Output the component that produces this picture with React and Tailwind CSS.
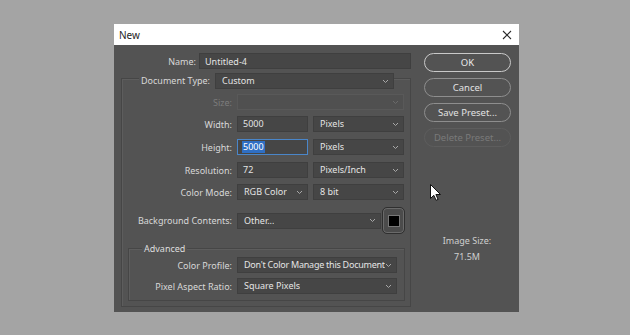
import React from 'react';

const Chevron = () => (
  <svg width="7" height="5" viewBox="0 0 7 5" className="shrink-0">
    <path d="M1 1l2.5 2.5L6 1" fill="none" stroke="#a8a8a8" strokeWidth="1" />
  </svg>
);

const Select = ({ value, w, disabled, tight }) => (
  <div
    className={`${w} h-[16px] flex items-center justify-between pl-[6px] pr-[4px] border ${
      disabled ? 'bg-[#505050] border-[#595959]' : 'bg-[#464646] border-[#3f3f3f] text-[#e4e4e4]'
    }`}
  >
    <span className={`whitespace-nowrap overflow-hidden leading-[14px] ${tight ? 'tracking-[-0.25px]' : ''}`}>{value}</span>
    {disabled ? <span className="opacity-30"><Chevron /></span> : <Chevron />}
  </div>
);

const Input = ({ value, focused }) => (
  <div
    className={`w-[71px] h-[16px] flex items-center pl-[4px] border ${
      focused ? 'bg-[#464646] border-[#4a86c9]' : 'bg-[#464646] border-[#3f3f3f]'
    } text-[#e4e4e4]`}
  >
    {focused ? (
      <span className="bg-[#2f6fc4] text-white px-[1px] leading-[12px]">{value}</span>
    ) : (
      <span className="px-[1px] leading-[12px]">{value}</span>
    )}
  </div>
);

const Label = ({ children, dim }) => (
  <div className={`w-[115px] pr-[5px] text-right whitespace-nowrap ${dim ? 'text-[#7c7c7c]' : ''}`}>{children}</div>
);

const Button = ({ children, primary, disabled }) => (
  <div
    className={`w-[87px] h-[19px] rounded-full flex items-center justify-center border ${
      primary
        ? 'border-[#c9c9c9] text-[#e8e8e8]'
        : disabled
        ? 'border-[#5d5d5d] text-[#7a7a7a]'
        : 'border-[#8e8e8e] text-[#e2e2e2]'
    }`}
  >
    {children}
  </div>
);

export default function App() {
  return (
    <div
      className="relative w-[630px] h-[335px] bg-[#a4a4a4] pt-[24px] pl-[114px] text-[9px] leading-none text-[#d8d8d8]"
      style={{ fontFamily: '"Noto Sans", "Open Sans", sans-serif' }}
    >
      <div className="w-[405px] h-[288px] bg-[#535353] flex flex-col">
        {/* title bar */}
        <div className="h-[21px] bg-white flex items-center justify-between pl-[5px] pr-[7px] text-[#1e1e1e] text-[10px]">
          <span>New</span>
          <svg width="10" height="10" viewBox="0 0 10 10">
            <path d="M1 1l8 8M9 1l-8 8" stroke="#2a2a2a" strokeWidth="1.1" />
          </svg>
        </div>

        <div className="flex flex-1">
          {/* left column */}
          <div className="w-[301px] pt-[8px]">
            <div className="flex items-center">
              <div className="w-[82px] text-right">Name:</div>
              <div className="ml-[3px] w-[212px] h-[16px] bg-[#464646] border border-[#3f3f3f] flex items-center pl-[5px] text-[#e4e4e4]">
                Untitled-4
              </div>
            </div>

            <div className="ml-[7px] mt-[9px] w-[290px] h-[229px] border border-[#464646] shadow-[inset_1px_1px_0_#5d5d5d]">
              <div className="-mt-[6px] flex items-center">
                <div className="w-[93px] flex justify-end">
                  <span className="bg-[#535353] pl-[2px] pr-[5px] leading-[16px]">Document Type:</span>
                </div>
                <Select value="Custom" w="w-[179px]" />
              </div>

              <div className="mt-[5px] flex items-center">
                <Label dim>Size:</Label>
                <Select value="" w="w-[167px]" disabled />
              </div>

              <div className="mt-[6px] flex items-center">
                <Label>Width:</Label>
                <Input value="5000" />
                <div className="ml-[5px]">
                  <Select value="Pixels" w="w-[91px]" />
                </div>
              </div>

              <div className="mt-[7px] flex items-center">
                <Label>Height:</Label>
                <Input value="5000" focused />
                <div className="ml-[5px]">
                  <Select value="Pixels" w="w-[91px]" />
                </div>
              </div>

              <div className="mt-[7px] flex items-center">
                <Label>Resolution:</Label>
                <Input value="72" />
                <div className="ml-[5px]">
                  <Select value="Pixels/Inch" w="w-[91px]" />
                </div>
              </div>

              <div className="mt-[6px] flex items-center">
                <Label>Color Mode:</Label>
                <Select value="RGB Color" w="w-[71px]" />
                <div className="ml-[5px]">
                  <Select value="8 bit" w="w-[91px]" />
                </div>
              </div>

              <div className="mt-[7px] flex items-center h-[27px]">
                <Label>Background Contents:</Label>
                <Select value="Other..." w="w-[144px]" />
                <div className="ml-[1px] w-[23px] h-[27px] rounded-[5px] border border-[#2f2f2f] bg-[#4b4b4b] shadow-[inset_0_0_0_1px_#6a6a6a] flex items-center justify-center">
                  <div className="w-[12px] h-[12px] bg-black border border-[#777]" />
                </div>
              </div>

              {/* Advanced */}
              <div className="ml-[6px] mt-[14px] w-[277px] h-[53px] border border-[#464646] shadow-[inset_1px_1px_0_#5d5d5d]">
                <div className="-mt-[7px] pl-[13px] h-[12px] flex items-center">
                  <span className="bg-[#535353] px-[2px] text-[#dedede]">Advanced</span>
                </div>
                <div className="mt-[3px] flex items-center">
                  <div className="w-[108px] pr-[5px] text-right whitespace-nowrap">Color Profile:</div>
                  <Select value="Don't Color Manage this Document" w="w-[160px]" tight />
                </div>
                <div className="mt-[5px] flex items-center">
                  <div className="w-[108px] pr-[5px] text-right whitespace-nowrap">Pixel Aspect Ratio:</div>
                  <Select value="Square Pixels" w="w-[160px]" />
                </div>
              </div>
            </div>
          </div>

          {/* right column */}
          <div className="flex-1 pt-[8px] pl-[9px] flex flex-col">
            <div className="flex flex-col gap-[6px] text-[9.5px]">
              <Button primary>OK</Button>
              <Button>Cancel</Button>
              <Button>Save Preset...</Button>
              <Button disabled>Delete Preset...</Button>
            </div>
            <div className="mt-[89px] -ml-[9px] flex flex-col items-center gap-[7px] text-[#cfcfcf]">
              <span>Image Size:</span>
              <span>71.5M</span>
            </div>
          </div>
        </div>
      </div>

      {/* mouse pointer */}
      <svg className="absolute left-[430px] top-[184px]" width="11" height="17" viewBox="0 0 11 17">
        <path d="M0.5 0.5v14l3.3-3.2 2.3 5 2-0.9-2.2-4.9h4.6z" fill="#fff" stroke="#111" strokeWidth="1" />
      </svg>
    </div>
  );
}
